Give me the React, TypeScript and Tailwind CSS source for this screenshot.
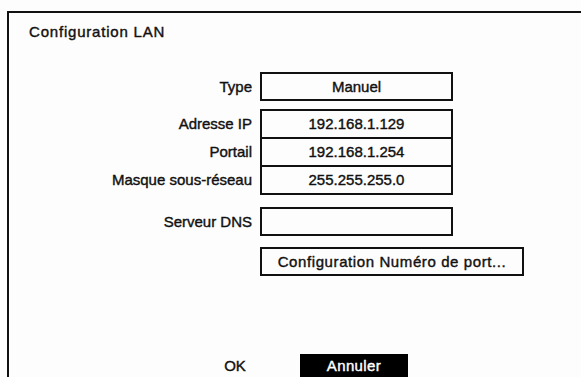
const FONT = "font-['Liberation_Sans',Arial,sans-serif]";

function Box({ children, className = "" }: { children?: React.ReactNode; className?: string }) {
  return (
    <div
      className={`flex items-center justify-center border-2 border-[#111] bg-[#fdfdfd] text-[#111] ${className}`}
    >
      {children}
    </div>
  );
}

function Row({ label, value, h = "h-[29px]", className = "" }: { label: string; value?: string; h?: string; className?: string }) {
  return (
    <div className={`flex items-center ${className}`}>
      <div className="w-[251px] pr-[8px] text-right">{label}</div>
      <Box className={`w-[193px] ${h}`}>{value}</Box>
    </div>
  );
}

export default function App() {
  return (
    <div
      className={`h-[377px] w-[581px] overflow-hidden bg-[#fdfdfd] pl-[7px] pt-[11px] text-[15px] leading-[18px] text-[#111] [-webkit-text-stroke:0.4px_currentColor] ${FONT}`}
    >
      <div className="h-[400px] border-l-2 border-t-2 border-[#111]">
        <div className="pl-[20px] pt-[10px] tracking-[0.8px]">Configuration LAN</div>

        <div className="mt-[31px] flex flex-col">
          <Row label="Type" value="Manuel" />

          <div className="mt-[8px] flex flex-col">
            <Row label="Adresse IP" value="192.168.1.129" h="h-[30px]" />
            <Row label="Portail" value="192.168.1.254" h="h-[30px]" className="-mt-[2px]" />
            <Row label="Masque sous-réseau" value="255.255.255.0" h="h-[30px]" className="-mt-[2px]" />
          </div>

          <Row label="Serveur DNS" className="mt-[12px]" />

          <div className="mt-[11px] flex">
            <div className="w-[251px]" />
            <Box className="h-[29px] w-[264px] tracking-[0.6px]">Configuration Numéro de port...</Box>
          </div>

          {/* OK / Annuler */}
          <div className="mt-[78px] flex items-start pl-[196px]">
            <div className="flex h-[24px] w-[60px] items-center justify-center">OK</div>
            <div className="ml-[35px] flex h-[24px] w-[108px] items-center justify-center bg-black text-white tracking-[0.4px]">
              Annuler
            </div>
          </div>
        </div>
      </div>
    </div>
  );
}
